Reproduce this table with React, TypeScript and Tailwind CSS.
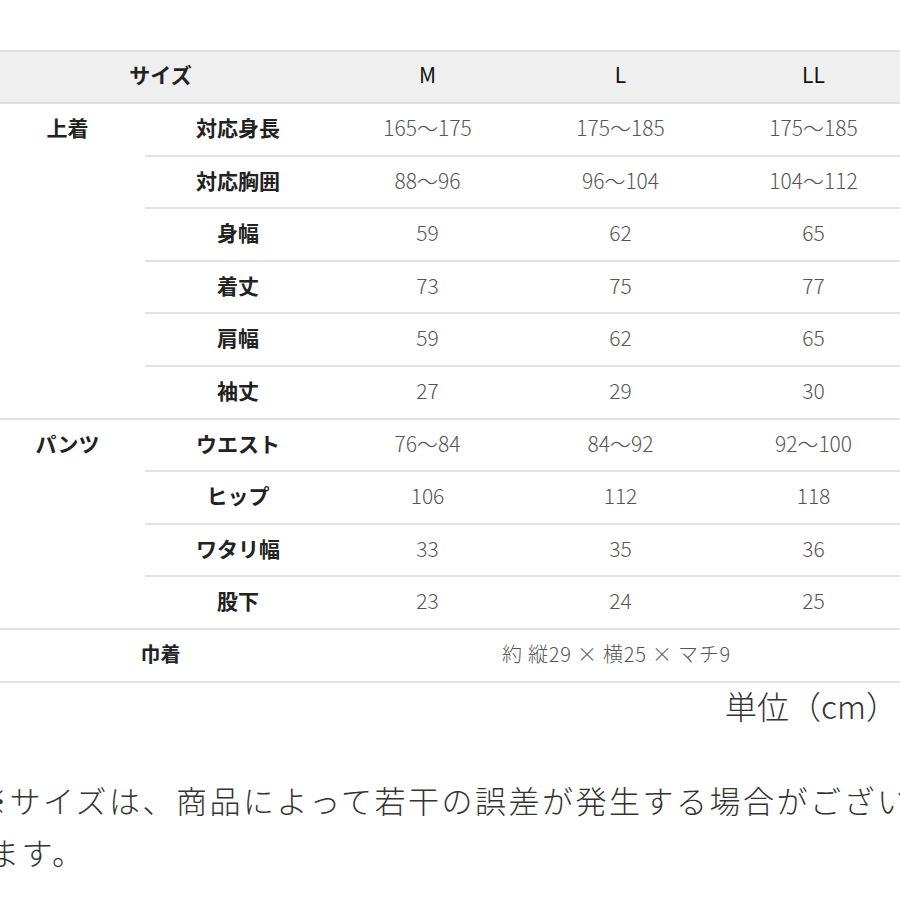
import React from "react";

const font = { fontFamily: '"Noto Sans CJK JP", "Noto Sans", sans-serif' };

type Row = { label: string; m: string; l: string; ll: string };

const groups: { name: string; rows: Row[] }[] = [
  {
    name: "上着",
    rows: [
      { label: "対応身長", m: "165〜175", l: "175〜185", ll: "175〜185" },
      { label: "対応胸囲", m: "88〜96", l: "96〜104", ll: "104〜112" },
      { label: "身幅", m: "59", l: "62", ll: "65" },
      { label: "着丈", m: "73", l: "75", ll: "77" },
      { label: "肩幅", m: "59", l: "62", ll: "65" },
      { label: "袖丈", m: "27", l: "29", ll: "30" },
    ],
  },
  {
    name: "パンツ",
    rows: [
      { label: "ウエスト", m: "76〜84", l: "84〜92", ll: "92〜100" },
      { label: "ヒップ", m: "106", l: "112", ll: "118" },
      { label: "ワタリ幅", m: "33", l: "35", ll: "36" },
      { label: "股下", m: "23", l: "24", ll: "25" },
    ],
  },
];

const line = "border-b-2 border-[#e2e2e2]";
const valueCell = `h-[52.6px] ${line} p-0 pb-[3px] text-center align-middle text-[21px] font-light text-[#555]`;

export default function App() {
  return (
    <div className="w-full h-[900px] overflow-hidden bg-white" style={font}>
      <div className="pt-[50px] -ml-[10px] w-[920px]">
        <table className="w-[920px] table-fixed border-collapse">
          <colgroup>
            <col className="w-[155px]" />
            <col className="w-[186px]" />
            <col className="w-[193px]" />
            <col className="w-[193px]" />
            <col className="w-[193px]" />
          </colgroup>
          <thead>
            <tr className="bg-[#efefef]">
              <th
                colSpan={2}
                className="h-[52px] border-y-2 border-[#e0e0e0] p-0 pb-[4px] text-center align-middle text-[21px] font-bold text-[#222]"
              >
                サイズ
              </th>
              {["M", "L", "LL"].map((s) => (
                <th
                  key={s}
                  className="h-[52px] border-y-2 border-[#e0e0e0] p-0 pb-[4px] text-center align-middle text-[21px] font-normal text-[#111]"
                >
                  {s}
                </th>
              ))}
            </tr>
          </thead>
          <tbody>
            {groups.map((g) =>
              g.rows.map((r, i) => (
                <tr key={g.name + r.label}>
                  {i === 0 && (
                    <td rowSpan={g.rows.length} className={`${line} p-0 align-top`}>
                      <div className="h-[48px] flex items-center justify-center text-[21px] font-bold text-[#222]">
                        {g.name}
                      </div>
                    </td>
                  )}
                  <td className={`${line} p-0 pb-[3px] text-center align-middle text-[21px] font-bold text-[#222]`}>
                    {r.label}
                  </td>
                  <td className={valueCell}>{r.m}</td>
                  <td className={valueCell}>{r.l}</td>
                  <td className={valueCell}>{r.ll}</td>
                </tr>
              ))
            )}
            <tr>
              <td
                colSpan={2}
                className={`h-[52.6px] ${line} p-0 pb-[3px] text-center align-middle text-[20px] font-bold text-[#222]`}
              >
                巾着
              </td>
              <td
                colSpan={3}
                className={`h-[52.6px] ${line} p-0 pb-[3px] pr-[8px] text-center align-middle text-[20px] tracking-[0.8px] font-light text-[#555]`}
              >
                約 縦29 × 横25 × マチ9
              </td>
            </tr>
          </tbody>
        </table>
      </div>

      <div className="pr-[2px] text-right text-[32px] leading-[45px] font-light text-[#333]">
        単位（cm）
      </div>

      <p className="mt-[46px] -ml-[12px] w-[960px] whitespace-nowrap text-[31px] leading-[52px] tracking-[2.5px] font-light text-[#333] -indent-3">
        ※サイズは、商品によって若干の誤差が発生する場合がござい
        <br />
        ます。
      </p>
    </div>
  );
}
